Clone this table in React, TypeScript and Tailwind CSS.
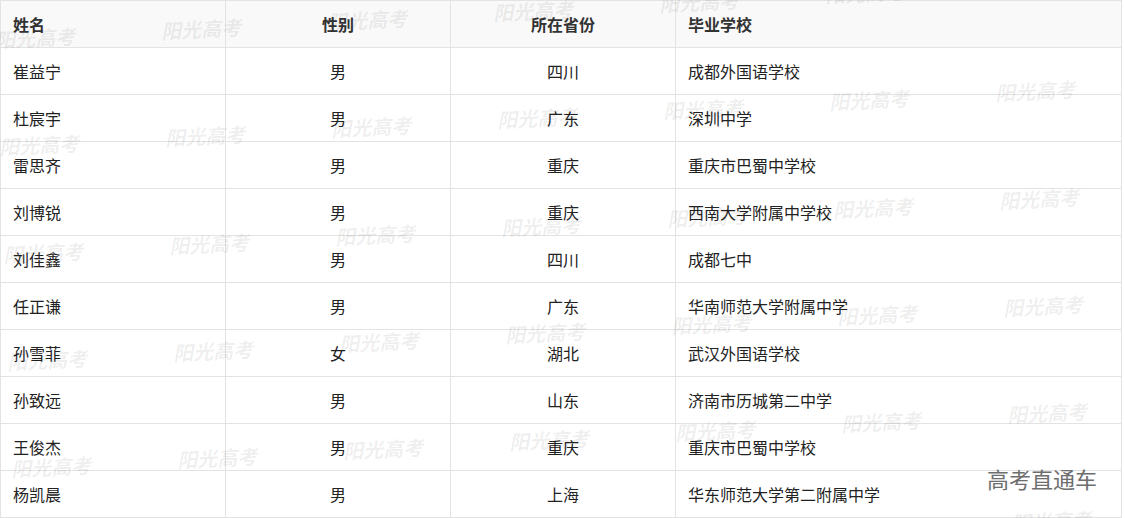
import React from "react";

const rows: [string, string, string, string][] = [
  ["崔益宁", "男", "四川", "成都外国语学校"],
  ["杜宸宇", "男", "广东", "深圳中学"],
  ["雷思齐", "男", "重庆", "重庆市巴蜀中学校"],
  ["刘博锐", "男", "重庆", "西南大学附属中学校"],
  ["刘佳鑫", "男", "四川", "成都七中"],
  ["任正谦", "男", "广东", "华南师范大学附属中学"],
  ["孙雪菲", "女", "湖北", "武汉外国语学校"],
  ["孙致远", "男", "山东", "济南市历城第二中学"],
  ["王俊杰", "男", "重庆", "重庆市巴蜀中学校"],
  ["杨凯晨", "男", "上海", "华东师范大学第二附属中学"],
];

const font = { fontFamily: '"Noto Sans CJK SC", "Noto Sans", sans-serif' };

function Watermarks() {
  const items: { left: number; top: number; key: string }[] = [];
  for (let r = 0; r < 6; r++) {
    for (let c = 0; c < 7; c++) {
      const left = -5 + 166 * c + 4 * r;
      const top = 28 + 107.3 * r - 9 * c;
      if (top > -30 && top < 520) items.push({ left, top, key: `${r}-${c}` });
    }
  }
  return (
    <div className="pointer-events-none absolute inset-0 overflow-hidden">
      {items.map((w) => (
        <span
          key={w.key}
          className="absolute whitespace-nowrap text-[20px] font-bold italic leading-none text-[rgba(0,0,0,0.075)] -rotate-3"
          style={{ left: w.left, top: w.top }}
        >
          阳光高考
        </span>
      ))}
    </div>
  );
}

export default function App() {
  return (
    <div className="relative h-[518px] w-[1125px] overflow-hidden bg-white" style={font}>
      <div className="w-[1122px] border-l border-r border-t border-[#e3e3e3]">
        <div className="grid h-[47px] grid-cols-[225px_225px_225px_1fr] border-b border-[#e3e3e3] bg-[#f9f9f9] text-[16px] font-bold text-[#333]">
          <div className="flex items-center border-r border-[#e3e3e3] pl-[12px]">姓名</div>
          <div className="flex items-center justify-center border-r border-[#e3e3e3]">性别</div>
          <div className="flex items-center justify-center border-r border-[#e3e3e3]">所在省份</div>
          <div className="flex items-center pl-[12px]">毕业学校</div>
        </div>
        {rows.map((r, i) => (
          <div
            key={i}
            className="grid h-[47px] grid-cols-[225px_225px_225px_1fr] border-b border-[#e3e3e3] text-[16px] text-[#222]"
          >
            <div className="flex items-center border-r border-[#e3e3e3] pl-[12px]">{r[0]}</div>
            <div className="flex items-center justify-center border-r border-[#e3e3e3]">{r[1]}</div>
            <div className="flex items-center justify-center border-r border-[#e3e3e3]">{r[2]}</div>
            <div className="flex items-center pl-[12px]">{r[3]}</div>
          </div>
        ))}
      </div>
      <Watermarks />
      <div className="pointer-events-none absolute left-[987px] top-[465px] text-[22px] leading-[26px] text-[#6e6e6e]">
        高考直通车
      </div>
    </div>
  );
}
